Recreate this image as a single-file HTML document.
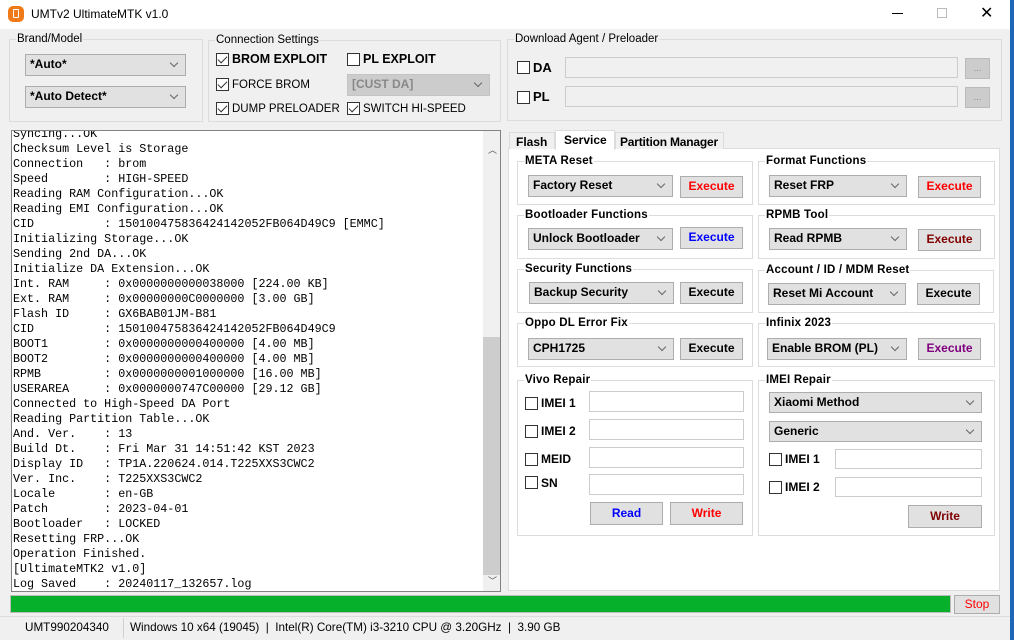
<!DOCTYPE html>
<html><head><meta charset="utf-8"><style>
*{box-sizing:border-box;margin:0;padding:0}
body{width:1014px;height:640px;background:#f0f0f0;font-family:"Liberation Sans",sans-serif;font-size:12px;color:#000;position:relative;overflow:hidden}
.a{position:absolute}
.grp{position:absolute;border:1px solid #dcdcdc}
.gl{position:absolute;top:-8px;left:6px;background:#f0f0f0;padding:0 1px;font-size:11.5px;line-height:14px;white-space:nowrap}
.w .gl{background:#fff;font-weight:bold;font-size:11.5px;letter-spacing:0.2px}
.cb{position:absolute;background:#e1e1e1;border:1px solid #adadad;font-weight:bold;font-size:12px;line-height:19px;padding-left:4px;white-space:nowrap}
.cb:after{content:"";position:absolute;right:8px;top:5px;width:5px;height:5px;border-right:1px solid #666;border-bottom:1px solid #666;transform:rotate(45deg)}
.btn{position:absolute;background:#e1e1e1;border:1px solid #adadad;font-weight:bold;text-align:center;font-size:12px;line-height:19px}
.chk{position:absolute;width:13px;height:13px;border:1px solid #333;background:#fff}
.chk.on:after{content:"";position:absolute;left:3px;top:0px;width:4px;height:8px;border-right:1.5px solid #333;border-bottom:1.5px solid #333;transform:rotate(45deg)}
.tb{position:absolute;background:#fff;border:1px solid #ccc}
.lbl{position:absolute;font-size:12px;line-height:14px;white-space:nowrap}
#log{position:absolute;left:11px;top:130px;width:490px;height:462px;background:#fff;border:1px solid #828282;overflow:hidden}
#log pre{position:absolute;left:1px;top:-4px;font-family:"Liberation Mono",monospace;font-size:11.7px;line-height:15px;color:#000}
</style></head><body>
<div class="a" style="left:0;top:0;width:1014px;height:29px;background:#fff"></div>
<div class="a" style="left:8px;top:6px;width:16px;height:16px;border-radius:5px;background:#f07a1a"></div>
<div class="a" style="left:13px;top:9px;width:6px;height:9px;border:1.5px solid #fff;border-radius:1px"></div>
<div class="a" style="left:31px;top:7px;font-size:12px">UMTv2 UltimateMTK v1.0</div>
<div class="a" style="left:892px;top:13px;width:11px;height:1px;background:#000"></div>
<div class="a" style="left:937px;top:8px;width:10px;height:10px;border:1px solid #bbb"></div>
<div class="a" style="left:980px;top:7px;font-size:16px;line-height:14px;font-weight:300">✕</div>
<div class="a" style="left:1010px;top:0;width:4px;height:640px;background:#1e66b8"></div>

<div class="grp" style="left:9px;top:39px;width:194px;height:83px"><span class="gl">Brand/Model</span></div>
<div class="cb" style="left:25px;top:54px;width:161px;height:22px">*Auto*</div>
<div class="cb" style="left:25px;top:86px;width:161px;height:22px">*Auto Detect*</div>

<div class="grp" style="left:208px;top:40px;width:293px;height:82px"><span class="gl">Connection Settings</span></div>
<div class="chk on" style="left:216px;top:53px"></div><div class="lbl" style="left:232px;top:52px;font-weight:bold;font-size:12.5px">BROM EXPLOIT</div>
<div class="chk" style="left:347px;top:53px"></div><div class="lbl" style="left:363px;top:52px;font-weight:bold;font-size:12.5px">PL EXPLOIT</div>
<div class="chk on" style="left:216px;top:78px"></div><div class="lbl" style="left:232px;top:78px;font-size:11.5px">FORCE BROM</div>
<div class="cb" style="left:347px;top:74px;width:143px;height:22px;background:#ccc;color:#888;border-color:#c4c4c4">[CUST DA]</div>
<div class="chk on" style="left:216px;top:102px"></div><div class="lbl" style="left:232px;top:102px;font-size:11.5px">DUMP PRELOADER</div>
<div class="chk on" style="left:347px;top:102px"></div><div class="lbl" style="left:363px;top:102px;font-size:11.5px">SWITCH HI-SPEED</div>

<div class="grp" style="left:507px;top:39px;width:495px;height:82px"><span class="gl">Download Agent / Preloader</span></div>
<div class="chk" style="left:517px;top:61px"></div><div class="lbl" style="left:533px;top:61px;font-weight:bold;font-size:13px">DA</div>
<div class="chk" style="left:517px;top:91px"></div><div class="lbl" style="left:533px;top:90px;font-weight:bold;font-size:13px">PL</div>
<div class="tb" style="left:565px;top:57px;width:393px;height:21px;background:#f0f0f0"></div>
<div class="tb" style="left:565px;top:86px;width:393px;height:21px;background:#f0f0f0"></div>
<div class="btn" style="left:965px;top:58px;width:25px;height:21px;background:#ccc;border-color:#bbb;color:#888;font-weight:normal;font-size:9px">...</div>
<div class="btn" style="left:965px;top:87px;width:25px;height:21px;background:#ccc;border-color:#bbb;color:#888;font-weight:normal;font-size:9px">...</div>

<div id="log"><pre>Syncing...OK
Checksum Level is Storage
Connection   : brom
Speed        : HIGH-SPEED
Reading RAM Configuration...OK
Reading EMI Configuration...OK
CID          : 150100475836424142052FB064D49C9 [EMMC]
Initializing Storage...OK
Sending 2nd DA...OK
Initialize DA Extension...OK
Int. RAM     : 0x0000000000038000 [224.00 KB]
Ext. RAM     : 0x00000000C0000000 [3.00 GB]
Flash ID     : GX6BAB01JM-B81
CID          : 150100475836424142052FB064D49C9
BOOT1        : 0x0000000000400000 [4.00 MB]
BOOT2        : 0x0000000000400000 [4.00 MB]
RPMB         : 0x0000000001000000 [16.00 MB]
USERAREA     : 0x0000000747C00000 [29.12 GB]
Connected to High-Speed DA Port
Reading Partition Table...OK
And. Ver.    : 13
Build Dt.    : Fri Mar 31 14:51:42 KST 2023
Display ID   : TP1A.220624.014.T225XXS3CWC2
Ver. Inc.    : T225XXS3CWC2
Locale       : en-GB
Patch        : 2023-04-01
Bootloader   : LOCKED
Resetting FRP...OK
Operation Finished.
[UltimateMTK2 v1.0]
Log Saved    : 20240117_132657.log</pre>
<div class="a" style="left:471px;top:0;width:17px;height:460px;background:#f0f0f0"></div>
<div class="a" style="left:471px;top:206px;width:17px;height:238px;background:#cdcdcd"></div>
<div class="a" style="left:476px;top:12px;font-size:9px;color:#555">︿</div>
<div class="a" style="left:476px;top:443px;font-size:9px;color:#555">﹀</div>
</div>

<div class="a" style="left:508px;top:148px;width:492px;height:443px;background:#fff;border:1px solid #dcdcdc"></div>
<div class="a" style="left:509px;top:132px;width:46px;height:17px;border:1px solid #dcdcdc;border-bottom:none;background:#f0f0f0;font-weight:bold;font-size:12px;padding:2px 6px">Flash</div>
<div class="a" style="left:555px;top:130px;width:60px;height:20px;border:1px solid #dcdcdc;border-bottom:none;background:#fff;font-weight:bold;font-size:12px;padding:2px 8px">Service</div>
<div class="a" style="left:615px;top:132px;width:109px;height:17px;border:1px solid #dcdcdc;border-bottom:none;background:#f0f0f0;font-weight:bold;font-size:12px;padding:2px 4px;white-space:nowrap;letter-spacing:-0.2px">Partition Manager</div>

<div class="w">
<div class="grp" style="left:517px;top:161px;width:236px;height:44px"><span class="gl">META Reset</span></div>
<div class="cb" style="left:528px;top:175px;width:145px;height:22px">Factory Reset</div>
<div class="btn" style="left:680px;top:176px;width:63px;height:22px;color:#f00">Execute</div>
<div class="grp" style="left:758px;top:161px;width:237px;height:44px"><span class="gl">Format Functions</span></div>
<div class="cb" style="left:769px;top:175px;width:138px;height:22px">Reset FRP</div>
<div class="btn" style="left:918px;top:176px;width:63px;height:22px;color:#f00">Execute</div>

<div class="grp" style="left:517px;top:215px;width:236px;height:44px"><span class="gl">Bootloader Functions</span></div>
<div class="cb" style="left:528px;top:228px;width:145px;height:22px">Unlock Bootloader</div>
<div class="btn" style="left:680px;top:227px;width:63px;height:22px;color:#00f">Execute</div>
<div class="grp" style="left:758px;top:215px;width:237px;height:44px"><span class="gl">RPMB Tool</span></div>
<div class="cb" style="left:769px;top:228px;width:138px;height:22px">Read RPMB</div>
<div class="btn" style="left:918px;top:229px;width:63px;height:22px;color:#800000">Execute</div>

<div class="grp" style="left:517px;top:269px;width:236px;height:44px"><span class="gl">Security Functions</span></div>
<div class="cb" style="left:529px;top:282px;width:145px;height:22px">Backup Security</div>
<div class="btn" style="left:680px;top:282px;width:63px;height:22px">Execute</div>
<div class="grp" style="left:758px;top:270px;width:236px;height:43px"><span class="gl">Account / ID / MDM Reset</span></div>
<div class="cb" style="left:768px;top:283px;width:138px;height:22px">Reset Mi Account</div>
<div class="btn" style="left:917px;top:283px;width:63px;height:22px">Execute</div>

<div class="grp" style="left:517px;top:323px;width:236px;height:44px"><span class="gl">Oppo DL Error Fix</span></div>
<div class="cb" style="left:528px;top:338px;width:146px;height:22px">CPH1725</div>
<div class="btn" style="left:680px;top:338px;width:63px;height:22px">Execute</div>
<div class="grp" style="left:758px;top:323px;width:237px;height:44px"><span class="gl">Infinix 2023</span></div>
<div class="cb" style="left:767px;top:338px;width:140px;height:22px">Enable BROM (PL)</div>
<div class="btn" style="left:918px;top:338px;width:63px;height:22px;color:#800080">Execute</div>

<div class="grp" style="left:517px;top:380px;width:236px;height:156px"><span class="gl">Vivo Repair</span></div>
<div class="chk" style="left:525px;top:397px"></div><div class="lbl" style="left:541px;top:396px;font-weight:bold">IMEI 1</div>
<div class="tb" style="left:589px;top:391px;width:155px;height:21px"></div>
<div class="chk" style="left:525px;top:425px"></div><div class="lbl" style="left:541px;top:424px;font-weight:bold">IMEI 2</div>
<div class="tb" style="left:589px;top:419px;width:155px;height:21px"></div>
<div class="chk" style="left:525px;top:453px"></div><div class="lbl" style="left:541px;top:452px;font-weight:bold">MEID</div>
<div class="tb" style="left:589px;top:447px;width:155px;height:21px"></div>
<div class="chk" style="left:525px;top:476px"></div><div class="lbl" style="left:541px;top:476px;font-weight:bold">SN</div>
<div class="tb" style="left:589px;top:474px;width:155px;height:21px"></div>
<div class="btn" style="left:590px;top:502px;width:73px;height:23px;color:#00f;line-height:21px">Read</div>
<div class="btn" style="left:670px;top:502px;width:73px;height:23px;color:#f00;line-height:21px">Write</div>

<div class="grp" style="left:758px;top:380px;width:237px;height:156px"><span class="gl">IMEI Repair</span></div>
<div class="cb" style="left:769px;top:392px;width:213px;height:21px">Xiaomi Method</div>
<div class="cb" style="left:769px;top:421px;width:213px;height:21px">Generic</div>
<div class="chk" style="left:769px;top:453px"></div><div class="lbl" style="left:785px;top:452px;font-weight:bold">IMEI 1</div>
<div class="tb" style="left:835px;top:449px;width:147px;height:20px"></div>
<div class="chk" style="left:769px;top:481px"></div><div class="lbl" style="left:785px;top:480px;font-weight:bold">IMEI 2</div>
<div class="tb" style="left:835px;top:477px;width:147px;height:20px"></div>
<div class="btn" style="left:908px;top:505px;width:74px;height:23px;color:#800000;line-height:21px">Write</div>
</div>

<div class="a" style="left:10px;top:595px;width:941px;height:18px;background:#06b02a;border:1px solid #bcbcbc"></div>
<div class="btn" style="left:954px;top:595px;width:46px;height:19px;color:#f00;font-weight:normal;line-height:17px;background:#e1e1e1">Stop</div>

<div class="a" style="left:0;top:616px;width:1010px;height:1px;background:#dcdcdc"></div>
<div class="a" style="left:25px;top:621px;font-size:11.7px">UMT990204340</div>
<div class="a" style="left:123px;top:618px;width:1px;height:20px;background:#d0d0d0"></div>
<div class="a" style="left:130px;top:621px;font-size:11.7px;white-space:pre">Windows 10 x64 (19045)  |  Intel(R) Core(TM) i3-3210 CPU @ 3.20GHz  |  3.90 GB</div>
</body></html>
